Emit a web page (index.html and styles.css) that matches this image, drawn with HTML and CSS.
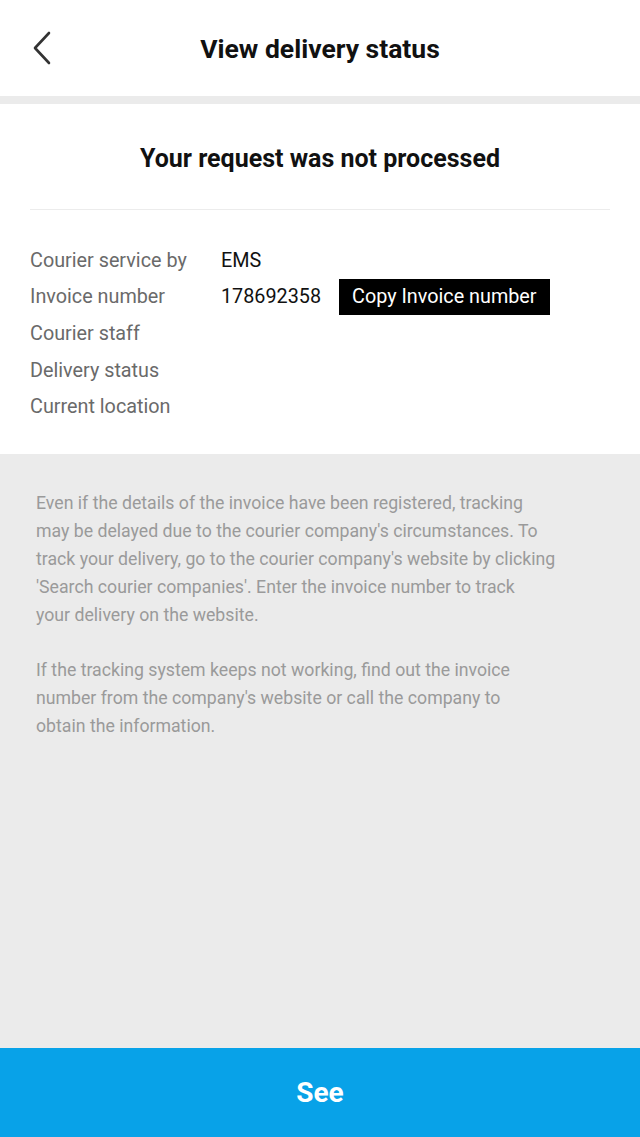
FILE: index.html
```html
<!DOCTYPE html>
<html>
<head>
<meta charset="utf-8">
<link rel="stylesheet" href="styles.css">
</head>
<body>
<div class="page">
  <header class="topbar">
    <button class="back" aria-label="Back">
      <svg width="20" height="34" viewBox="0 0 20 34"><path d="M17 2 L3 17 L17 32" fill="none" stroke="#333" stroke-width="2.6" stroke-linecap="round" stroke-linejoin="round"/></svg>
    </button>
    <h1 class="title">View delivery status</h1>
  </header>
  <div class="sep"></div>
  <section class="card">
    <h2 class="heading">Your request was not processed</h2>
    <div class="divider"></div>
    <div class="rows">
      <div class="row"><span class="label">Courier service by</span><span class="value">EMS</span></div>
      <div class="row"><span class="label">Invoice number</span><span class="value">178692358</span><span class="copy">Copy Invoice number</span></div>
      <div class="row"><span class="label">Courier staff</span></div>
      <div class="row"><span class="label">Delivery status</span></div>
      <div class="row"><span class="label">Current location</span></div>
    </div>
  </section>
  <section class="notes">
    <p>Even if the details of the invoice have been registered, tracking<br>may be delayed due to the courier company's circumstances. To<br>track your delivery, go to the courier company's website by clicking<br>'Search courier companies'. Enter the invoice number to track<br>your delivery on the website.</p>
    <p>If the tracking system keeps not working, find out the invoice<br>number from the company's website or call the company to<br>obtain the information.</p>
  </section>
  <button class="see">See</button>
</div>
</body>
</html>
```
FILE: styles.css
```css
* { box-sizing: border-box; }
html, body { margin: 0; padding: 0; }
body { font-family: Roboto, "Noto Sans", sans-serif; background: #ebebeb; }
.page { display: flex; flex-direction: column; height: 1137px; }
.topbar { height: 96px; background: #fff; display: flex; align-items: center; justify-content: center; position: relative; }
.back { position: absolute; left: 32px; top: 31px; border: 0; background: none; padding: 0; width: 20px; height: 34px; }
.back svg { display: block; }
.title { margin: 0; font-size: 26.5px; font-weight: 700; color: #111; }
.sep { height: 8px; background: #ebebeb; }
.card { background: #fff; padding: 0 30px 29px; }
.heading { margin: 0; height: 105px; display: flex; align-items: center; justify-content: center; padding-top: 4px; font-size: 25px; font-weight: 700; color: #111; }
.divider { height: 1px; background: #ececec; }
.rows { padding-top: 32px; display: flex; flex-direction: column; }
.row { height: 36.6px; display: flex; align-items: center; font-size: 19.8px; }
.label { width: 191px; color: #6a6a6a; }
.value { color: #111; }
.copy { margin-left: 18px; background: #000; color: #fff; height: 36px; padding: 0 13px; display: flex; align-items: center; }
.notes { flex: 1; padding: 35px 36px 0; color: #9a9a9a; font-size: 17.7px; line-height: 28px; }
.notes p { margin: 0 0 27px; }
.see { height: 89px; border: 0; background: #08a2e8; color: #fff; font-family: Roboto, sans-serif; font-size: 28px; font-weight: 700; padding: 0; }
```
